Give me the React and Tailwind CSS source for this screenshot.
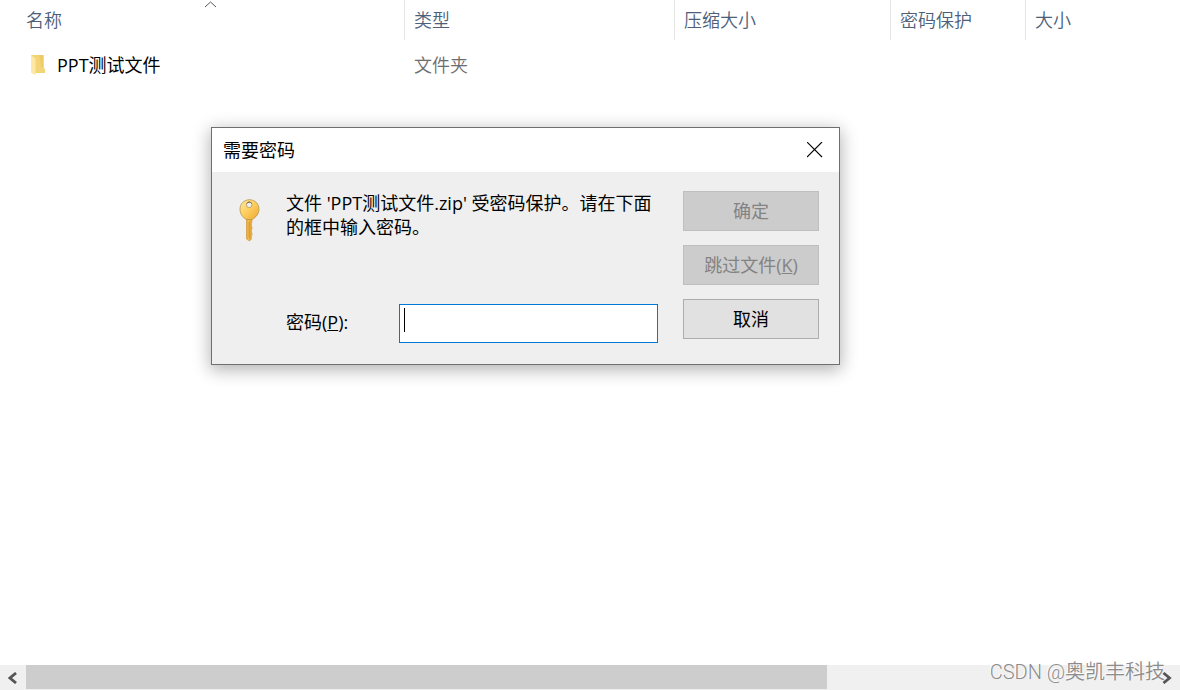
import React, { useState } from 'react';

const columns = [
    { label: '名称', width: 'w-[405px]', sorted: true },
    { label: '类型', width: 'w-[270px]' },
    { label: '压缩大小', width: 'w-[216px]' },
    { label: '密码保护', width: 'w-[135px]' },
    { label: '大小', width: '' },
];

const files = [{ name: 'PPT测试文件', type: '文件夹' }];

const FolderIcon = () => (
    <svg className="w-4 h-[22px] shrink-0" viewBox="0 0 16 22" aria-hidden="true">
        <path d="M1 1h12.500v13l1.500 1v4H5L1 18z" fill="#f3d477" />
        <path d="M9 1h4.500v13h-2z" fill="#efcb66" />
        <path d="M1 1l4.500 3.500v17L1 18.500z" fill="#ffe8a5" />
    </svg>
);

const KeyIcon = () => (
    <svg className="w-[22px] h-[43px] shrink-0 mt-2" viewBox="0 0 22 43" aria-hidden="true">
        <defs>
            <linearGradient id="keyHead" x1="0" y1="0" x2="1" y2="1">
                <stop offset="0" stopColor="#ffe9a0" />
                <stop offset="0.5" stopColor="#fccd5c" />
                <stop offset="1" stopColor="#eba632" />
            </linearGradient>
            <linearGradient id="keyBlade" x1="0" y1="0" x2="1" y2="0">
                <stop offset="0" stopColor="#dd9d30" />
                <stop offset="0.35" stopColor="#fbc353" />
                <stop offset="0.6" stopColor="#e3a136" />
                <stop offset="1" stopColor="#f3b84a" />
            </linearGradient>
        </defs>
        <path d="M7.500 18h5.500v5l-.6 1v3l.6 1v2l-.6 1v2l.6 1v2l-.6 1v3l-2 2-2.900-2z" fill="url(#keyBlade)" stroke="#cf9330" strokeWidth="0.6" />
        <path d="M10.500 0.700C5 .7 1 4.900 1 10.200c0 4.500 2.500 8.300 6.500 10.300H13c4-2 7-5.800 7-10.300C20 4.900 16 .7 10.500.7z" fill="url(#keyHead)" stroke="#b79448" strokeWidth="0.8" />
        <circle cx="10.200" cy="5.800" r="2.800" fill="#efefef" stroke="#a89668" strokeWidth="0.8" />
        <path d="M7.800 4.600a2.700 2.700 0 0 1 4.800 0" fill="none" stroke="#6f6246" strokeWidth="1" />
        <path d="M10 23v16" stroke="#d0902c" strokeWidth="0.8" />
    </svg>
);

const FileTable = () => (
    <table className="w-full table-fixed border-separate border-spacing-0 text-left">
        <thead>
            <tr className="h-10">
                {columns.map((col) => (
                    <th
                        key={col.label}
                        className={`${col.width} relative p-0 pl-[9px] first:pl-[26px] font-[350] text-[#4c607a] border-r border-[#e5e5e5] last:border-r-0`}
                    >
                        {col.label}
                        {col.sorted && (
                            <svg className="absolute top-0 left-[204px] w-3 h-2" viewBox="0 0 12 8" aria-hidden="true">
                                <path d="M1 7l5.500-5 5.500 5" fill="none" stroke="#555" strokeWidth="1" />
                            </svg>
                        )}
                    </th>
                ))}
            </tr>
        </thead>
        <tbody>
            {files.map((file) => (
                <tr key={file.name} className="h-[50px]">
                    <td className="p-0 pl-[30px]">
                        <div className="flex items-center gap-[11px]">
                            <FolderIcon />
                            {file.name}
                        </div>
                    </td>
                    <td className="p-0 pl-[9px] font-[350] text-[#6d6d6d]">{file.type}</td>
                    <td />
                    <td />
                    <td />
                </tr>
            ))}
        </tbody>
    </table>
);

const PasswordDialog = () => {
    const [password, setPassword] = useState('');

    return (
        <form
            role="dialog"
            aria-labelledby="dialog-title"
            onSubmit={(e) => e.preventDefault()}
            className="absolute top-[127px] left-[211px] border border-[#6f6f6f] bg-[#efefef] shadow-[0_4px_16px_1px_rgba(0,0,0,0.3)]"
        >
            {/* Title bar */}
            <div className="flex items-center justify-between h-11 pl-[11px] bg-white">
                <h1 id="dialog-title">需要密码</h1>
                <button type="button" aria-label="关闭" className="flex items-center justify-center w-12 h-11">
                    <svg className="w-4 h-4" viewBox="0 0 16 16" aria-hidden="true">
                        <path d="M0 0l15 15M15 0l-15 15" stroke="#000" strokeWidth="1.100" />
                    </svg>
                </button>
            </div>

            <div className="flex items-start gap-[25px] pt-[19px] pr-5 pb-[21px] pl-[27px]">
                <KeyIcon />
                <div className="w-[372px]">
                    <p className="h-12">文件 'PPT测试文件.zip' 受密码保护。请在下面的框中输入密码。</p>
                    <div className="flex items-start justify-between mt-[65px]">
                        <label htmlFor="password" className="pt-[6px]">
                            密码(<span className="underline">P</span>):
                        </label>
                        <div className="relative">
                            <input
                                id="password"
                                type="password"
                                value={password}
                                onChange={(e) => setPassword(e.target.value)}
                                className="block w-[259px] h-[39px] px-1 border border-[#0078d7] bg-white outline-none"
                            />
                            {!password && <span className="absolute top-1 left-[5px] w-px h-6 bg-black pointer-events-none" />}
                        </div>
                    </div>
                </div>
                <div className="flex flex-col gap-[14px] w-[136px]">
                    <button type="submit" disabled className="h-10 border border-[#bfbfbf] bg-[#cccccc] text-[#838383]">
                        确定
                    </button>
                    <button type="button" disabled className="h-10 border border-[#bfbfbf] bg-[#cccccc] text-[#838383]">
                        跳过文件(<span className="underline">K</span>)
                    </button>
                    <button type="button" className="h-10 border border-[#adadad] bg-[#e1e1e1]">
                        取消
                    </button>
                </div>
            </div>
        </form>
    );
};

const ScrollBar = () => (
    <div className="relative flex h-[25px] bg-[#f0f0f0]">
        <button type="button" aria-label="向左滚动" className="flex items-center justify-center w-[26px]">
            <svg className="w-[10px] h-3" viewBox="0 0 10 12" aria-hidden="true">
                <path d="M8 1L2 6l6 5" fill="none" stroke="#555" strokeWidth="2.800" />
            </svg>
        </button>
        <div className="flex-1">
            <div className="w-[71%] h-6 bg-[#cdcdcd]" />
        </div>
        <button type="button" aria-label="向右滚动" className="flex items-center justify-center w-[26px]">
            <svg className="w-[10px] h-3" viewBox="0 0 10 12" aria-hidden="true">
                <path d="M1.500 1l6 5-6 5" fill="none" stroke="#555" strokeWidth="2.800" />
            </svg>
        </button>
        <span className="absolute right-[15px] bottom-1 text-[20px] leading-[28px] font-[350] font-['Roboto','Noto_Sans_CJK_SC',sans-serif] text-[#8c8c8c] [text-shadow:-1px_-1px_0_#fff] whitespace-nowrap pointer-events-none">
            CSDN @奥凯丰科技
        </span>
    </div>
);

export default function App() {
    return (
        <div className="relative flex flex-col min-h-screen bg-white text-black text-[18px] leading-6 font-['Open_Sans','Noto_Sans_CJK_SC',sans-serif]">
            <main className="flex-1">
                <FileTable />
            </main>
            <ScrollBar />
            <PasswordDialog />
        </div>
    );
}
